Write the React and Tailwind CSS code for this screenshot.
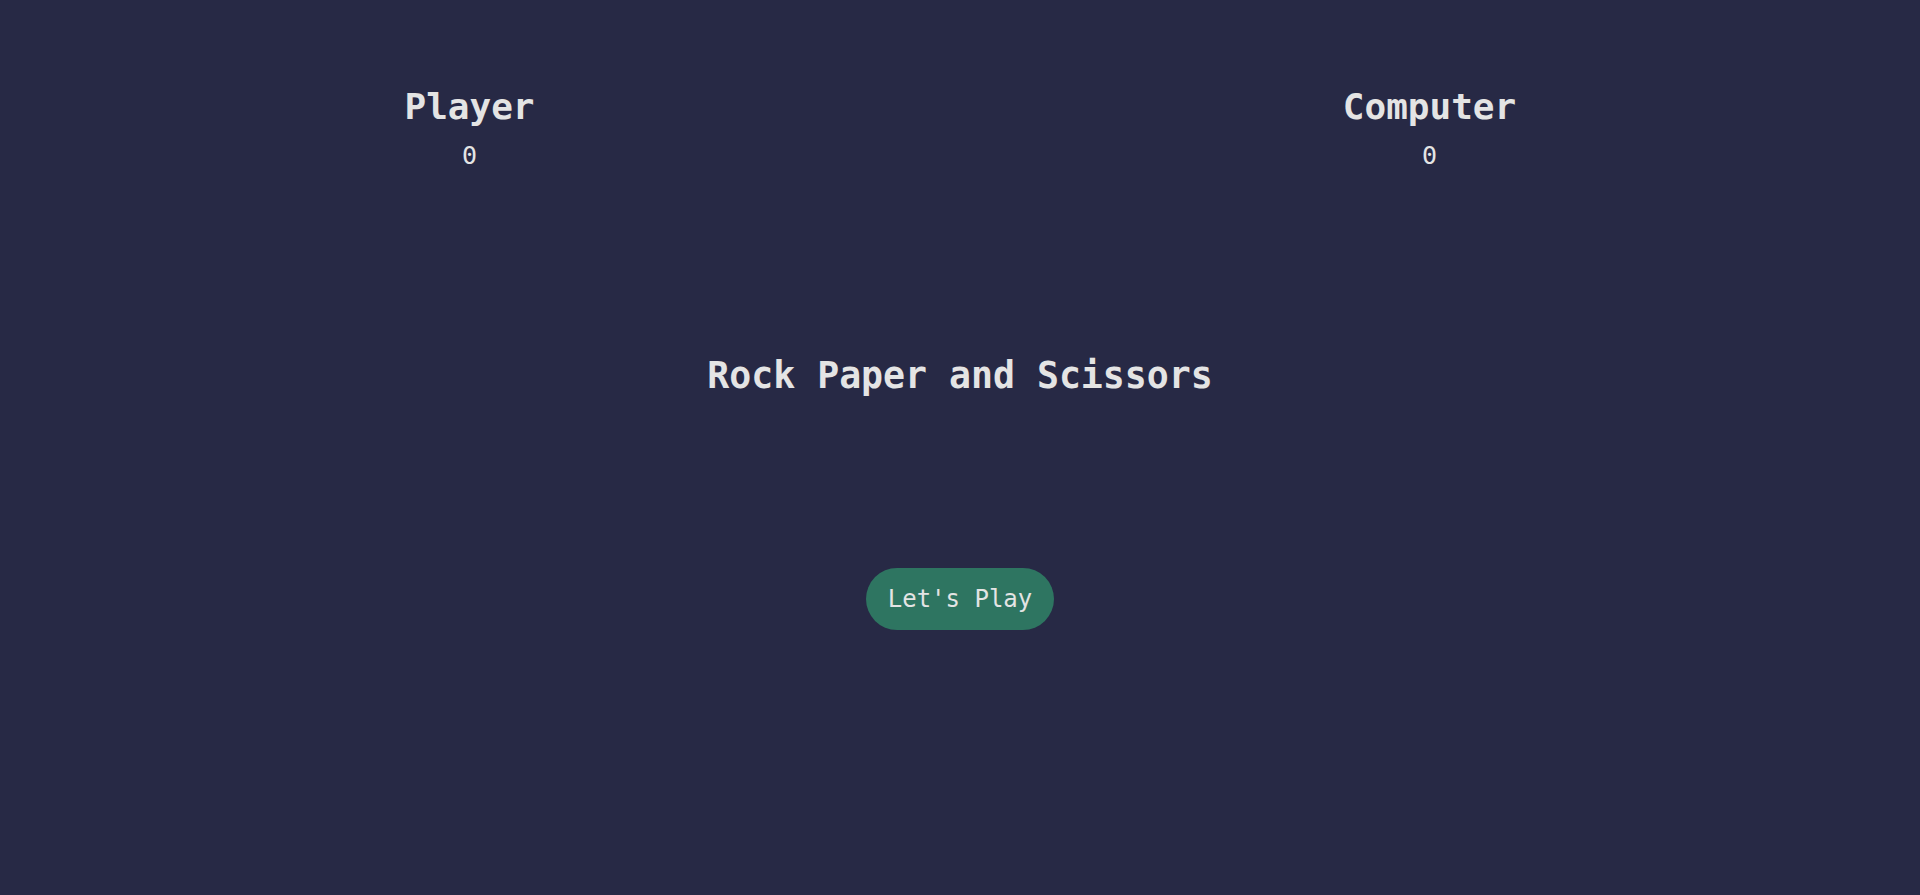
const mono = { fontFamily: '"DejaVu Sans Mono", "Liberation Mono", monospace' }

function Score({ label, value }) {
  return (
    <div className="flex w-[960px] flex-col items-center pr-[21px]">
      <h2 className="text-[36px] font-bold leading-[44px]">{label}</h2>
      <p className="mt-[11px] text-[25px] leading-[32px]">{value}</p>
    </div>
  )
}

export default function App() {
  return (
    <div
      className="flex h-[895px] w-full flex-col bg-[#272945] text-[#e4e4e4]"
      style={mono}
    >
      <div className="flex pt-[85px]">
        <Score label="Player" value="0" />
        <Score label="Computer" value="0" />
      </div>

      <div className="flex flex-col items-center">
        <h1 className="mt-[182px] text-[36.5px] font-bold leading-[44px]">
          Rock Paper and Scissors
        </h1>
        <button className="mt-[170px] flex h-[62px] w-[188px] items-center justify-center rounded-full bg-[#2e7561] text-[24px] text-[#e4e4e4]">
          Let's Play
        </button>
      </div>
    </div>
  )
}
